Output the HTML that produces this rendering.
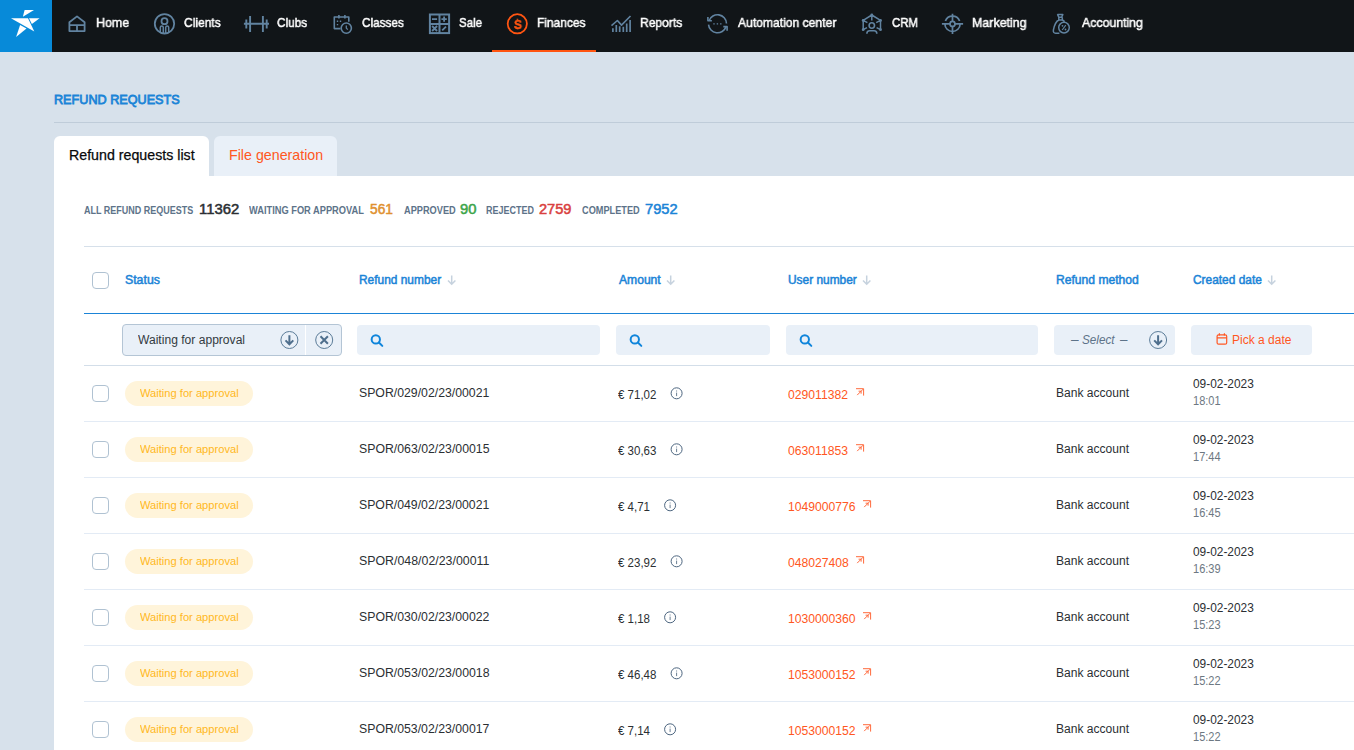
<!DOCTYPE html>
<html lang="en"><head><meta charset="utf-8"><title>Refund requests</title>
<style>
html,body{margin:0;padding:0;}
body{width:1354px;height:750px;overflow:hidden;background:#d7e1eb;font-family:"Liberation Sans",sans-serif;}
#app{position:relative;width:1354px;height:750px;overflow:hidden;}
.t{position:absolute;white-space:nowrap;line-height:1;transform-origin:0 0;}
.b{position:absolute;box-sizing:border-box;}
.cb{position:absolute;box-sizing:border-box;width:17px;height:17px;left:92px;border:1px solid #b0c2d2;border-radius:4px;background:#fff;}
.ln{position:absolute;left:84px;width:1270px;height:1px;background:#e3ebf5;}
.inp{position:absolute;box-sizing:border-box;top:325px;height:30px;background:#e9f0f8;border-radius:4px;}
.badge{position:absolute;left:125px;width:128px;height:25px;border-radius:13px;background:#fff4da;}
svg{position:absolute;overflow:visible;}
.g{will-change:transform;}

</style></head><body>
<div id="app">
<div class="b" style="left:0;top:0;width:1354px;height:52px;background:#111518"></div>
<div class="b" style="left:0;top:0;width:52px;height:52px;background:#078ad9"></div>
<div class="b" style="left:492px;top:50px;width:104px;height:2px;background:#ff5410"></div>
<svg style="left:0;top:0" width="1354" height="52" viewBox="0 0 1354 52"><g fill="#fff"><polygon points="24.6,10.1 34,10 22.9,16.7"/><polygon points="11,18.2 28,18.2 34.3,31.6"/><polygon points="29,18.2 39.6,18.2 31.9,24"/><polygon points="20.1,25 26.5,28.4 16.1,36.9"/></g><g fill="none" stroke="#6183a0" stroke-width="1.8" stroke-linejoin="round" stroke-linecap="butt"><path d="M69.4 31.1 V22.3 L77 16.4 L84.6 22.3 V31.1 Z M69.4 25.1 H84.6 M77 25.1 V31.1"/><circle cx="164.5" cy="23.8" r="9.7"/><circle cx="164.5" cy="21.2" r="3"/><path d="M160.3 32.3 V27.6 a1.5 1.5 0 0 1 3 0 V33.2 M165.7 33.2 V27.6 a1.5 1.5 0 0 1 3 0 V32.3" stroke-width="1.5"/><path d="M243.9 23.8 H269 M250.1 15.9 V31.9 M262.9 15.9 V31.9 M246.3 19.4 V28.6 M266.7 19.4 V28.6" stroke-width="1.9"/><path d="M340.5 28.6 H334.3 V17 H348.8 V21.8 M338.9 14.9 V18.6 M344.9 14.9 V18.6" stroke-width="1.6"/><path d="M336.8 21.3 h1.4 M339.8 21.3 h1.4 M336.8 24.6 h1.4" stroke-width="1.4"/><circle cx="346.3" cy="28.1" r="5.1" stroke-width="1.6"/><path d="M346.3 25.4 V28.1 L347.8 29.6" stroke-width="1.3"/><rect x="429.9" y="14.5" width="19.2" height="18.6" stroke-width="2" stroke-linejoin="miter"/><path d="M439.5 14.5 V33.1 M429.9 23.9 H449.1" stroke-width="2"/><path d="M432 19.1 h5.1 M441.4 19.1 h5.4 M444.1 16.4 v5.4 M432.1 26 l5 5 M437.1 26 l-5 5 M442.2 30.4 l3.8 -3.7" stroke-width="1.8"/><path d="M612.9 31.9 V28.2 M616.3 31.9 V25.1 M619.7 31.9 V26.2 M623.3 31.9 V26.7 M626.7 31.9 V23.6 M630.1 31.9 V20" stroke-width="1.7"/><path d="M611.5 25.6 L617.4 20.5 L621.5 25.1 L630.5 16" stroke-width="1.6"/><path d="M709.04 20.72 A9 9 0 0 1 726.49 23.49 M708.53 24.58 A9 9 0 0 0 725.96 26.88" stroke-width="1.6"/><path d="M707.9 17 V20.8 H711.9 M727.1 30.8 V26.6 H723.3" stroke-width="1.6"/><path d="M713.3 23.9 h1.4 M716.7 23.9 h1.4 M720.1 23.9 h1.4" stroke-width="1.4"/><path d="M863.2 29.7 V20.4 L871.8 15 L880.5 20.4 V29.7 M871.8 15 V20.4 M863.2 20.4 L867.4 22.7 M880.5 20.4 L876.2 22.7 M863.2 29.7 L867 27.6 M880.5 29.7 L876.6 27.6" stroke-width="1.5"/><circle cx="871.8" cy="25.5" r="2.7" stroke-width="1.6"/><path d="M866.9 33.8 v-0.4 a2.7 2.7 0 0 1 2.7 -2.7 h4.5 a2.7 2.7 0 0 1 2.7 2.7 v0.4" stroke-width="1.6"/><path d="M945.4 21 A7.6 7.6 0 0 1 959.6 21 M944.9 23.9 A7.6 7.6 0 0 0 960.1 23.9" stroke-width="1.7"/><path d="M941.9 23.9 H963.1 M952.5 13.8 V34" stroke-width="1.7"/><circle cx="952.5" cy="23.9" r="2.5" fill="#111518" stroke-width="1.7"/><path d="M1057.6 14.6 H1062.8 L1061.6 17.3 H1058.8 Z M1058.8 17.3 V20 H1062.3 V17.3 M1058.8 20 C1055.5 21.5 1054.2 26 1053.4 30 C1053 32 1054 33.2 1055.6 33.2 H1059.4 M1062.3 20 C1063.2 20.4 1064 21 1064.6 21.8" stroke-width="1.5"/><circle cx="1064" cy="27.6" r="5.3" stroke-width="1.5"/><path d="M1065.8 25.2 L1062.2 30" stroke-width="1.2"/></g><g fill="#6183a0"><circle cx="871.8" cy="15" r="1.4"/><circle cx="863.2" cy="20.4" r="1.4"/><circle cx="880.5" cy="20.4" r="1.4"/><circle cx="863.2" cy="29.7" r="1.4"/><circle cx="880.5" cy="29.7" r="1.4"/><circle cx="1062.5" cy="25.8" r="0.9"/><circle cx="1065.5" cy="29.5" r="0.9"/></g><circle cx="517.3" cy="23.8" r="9.6" fill="none" stroke="#ff5512" stroke-width="1.8"/><path d="M517.4 18.7 V19.8 M517.4 28 V29.2" stroke="#ff5512" stroke-width="1.6" fill="none"/></svg>
<div class="b" style="left:54px;top:122px;width:1300px;height:1px;background:#bfccd9"></div>
<div class="b" style="left:54px;top:136px;width:155px;height:40px;background:#fff;border-radius:6px 6px 0 0"></div>
<div class="b" style="left:214px;top:136px;width:123px;height:40px;background:#e9f0f8;border-radius:6px 6px 0 0"></div>
<div class="b" style="left:54px;top:176px;width:1300px;height:574px;background:#fff"></div>
<div class="ln" style="top:246px;background:#d6e0ea"></div>
<div class="ln" style="top:313px;background:#1b84d7"></div>
<div class="ln" style="top:365px;background:#d3dee9"></div>
<div class="ln" style="top:421px"></div>
<div class="ln" style="top:477px"></div>
<div class="ln" style="top:533px"></div>
<div class="ln" style="top:589px"></div>
<div class="ln" style="top:645px"></div>
<div class="ln" style="top:701px"></div>
<div class="cb" style="top:272px"></div>
<div class="cb" style="top:385px"></div>
<div class="badge" style="top:381px"></div>
<div class="cb" style="top:441px"></div>
<div class="badge" style="top:437px"></div>
<div class="cb" style="top:497px"></div>
<div class="badge" style="top:493px"></div>
<div class="cb" style="top:553px"></div>
<div class="badge" style="top:549px"></div>
<div class="cb" style="top:609px"></div>
<div class="badge" style="top:605px"></div>
<div class="cb" style="top:665px"></div>
<div class="badge" style="top:661px"></div>
<div class="cb" style="top:721px"></div>
<div class="badge" style="top:717px"></div>
<div class="b" style="left:122px;top:324px;width:220px;height:32px;background:#e9f0f8;border:1px solid #b4c5d5;border-radius:4px"></div>
<div class="b" style="left:305px;top:325px;width:1px;height:30px;background:#fff"></div>
<div class="inp" style="left:357px;width:243px"></div>
<div class="inp" style="left:616px;width:154px"></div>
<div class="inp" style="left:786px;width:252px"></div>
<div class="inp" style="left:1054px;width:121px"></div>
<div class="inp" style="left:1191px;width:121px"></div>
<svg style="left:0;top:0" width="1354" height="750" viewBox="0 0 1354 750"><circle cx="289.4" cy="340" r="8.5" fill="none" stroke="#5b7c98" stroke-width="1"/><path d="M289.4 335.2 V344 M285.5 340.4 L289.4 344.3 L293.29999999999995 340.4" fill="none" stroke="#4f6f8d" stroke-width="2"/><circle cx="1158.1" cy="340" r="8.5" fill="none" stroke="#5b7c98" stroke-width="1"/><path d="M1158.1 335.2 V344 M1154.1999999999998 340.4 L1158.1 344.3 L1162.0 340.4" fill="none" stroke="#4f6f8d" stroke-width="2"/><circle cx="324.2" cy="340" r="8.5" fill="none" stroke="#5b7c98" stroke-width="1"/><path d="M320.5 336.3 L327.9 343.7 M327.9 336.3 L320.5 343.7" fill="none" stroke="#4f6f8d" stroke-width="2"/><circle cx="375.8" cy="339.4" r="4.15" fill="none" stroke="#0f85db" stroke-width="2"/><path d="M378.9 342.5 L382.3 345.9" stroke="#0f85db" stroke-width="2" stroke-linecap="round"/><circle cx="634.8" cy="339.4" r="4.15" fill="none" stroke="#0f85db" stroke-width="2"/><path d="M637.9 342.5 L641.3 345.9" stroke="#0f85db" stroke-width="2" stroke-linecap="round"/><circle cx="804.8" cy="339.4" r="4.15" fill="none" stroke="#0f85db" stroke-width="2"/><path d="M807.9 342.5 L811.3 345.9" stroke="#0f85db" stroke-width="2" stroke-linecap="round"/><rect x="1217.1" y="334.8" width="9.6" height="9.4" rx="1.5" fill="none" stroke="#ff5722" stroke-width="1.2"/><path d="M1217.1 337.8 H1226.7 M1219.4 333.2 V335.6 M1224.4 333.2 V335.6" fill="none" stroke="#ff5722" stroke-width="1.2"/><path d="M451.7 275.6 V284 M448 280.4 L451.7 284.2 L455.4 280.4" fill="none" stroke="#c6d2de" stroke-width="1.5"/><path d="M670.7 275.6 V284 M667 280.4 L670.7 284.2 L674.4 280.4" fill="none" stroke="#c6d2de" stroke-width="1.5"/><path d="M866.7 275.6 V284 M863 280.4 L866.7 284.2 L870.4 280.4" fill="none" stroke="#c6d2de" stroke-width="1.5"/><path d="M1271.7 275.6 V284 M1268 280.4 L1271.7 284.2 L1275.4 280.4" fill="none" stroke="#c6d2de" stroke-width="1.5"/><circle cx="676.6" cy="393.3" r="5.5" fill="none" stroke="#4d6680" stroke-width="1"/><path d="M676.6 392.6 V396.1 M676.6 390.5 v1" stroke="#6b7f93" stroke-width="1" fill="none"/><path d="M856 388.7 H863.6 V395.6 M863.2 389.1 L857.2 395.1 M858.6 391.2 H861.1 V393.7" fill="none" stroke="#ff6a3d" stroke-width="1"/><circle cx="676.6" cy="449.3" r="5.5" fill="none" stroke="#4d6680" stroke-width="1"/><path d="M676.6 448.6 V452.1 M676.6 446.5 v1" stroke="#6b7f93" stroke-width="1" fill="none"/><path d="M856 444.7 H863.6 V451.6 M863.2 445.1 L857.2 451.1 M858.6 447.2 H861.1 V449.7" fill="none" stroke="#ff6a3d" stroke-width="1"/><circle cx="670.1" cy="505.3" r="5.5" fill="none" stroke="#4d6680" stroke-width="1"/><path d="M670.1 504.6 V508.1 M670.1 502.5 v1" stroke="#6b7f93" stroke-width="1" fill="none"/><path d="M863 500.7 H870.6 V507.6 M870.2 501.1 L864.2 507.1 M865.6 503.2 H868.1 V505.7" fill="none" stroke="#ff6a3d" stroke-width="1"/><circle cx="676.6" cy="561.3" r="5.5" fill="none" stroke="#4d6680" stroke-width="1"/><path d="M676.6 560.6 V564.1 M676.6 558.5 v1" stroke="#6b7f93" stroke-width="1" fill="none"/><path d="M856 556.7 H863.6 V563.6 M863.2 557.1 L857.2 563.1 M858.6 559.2 H861.1 V561.7" fill="none" stroke="#ff6a3d" stroke-width="1"/><circle cx="670.1" cy="617.3" r="5.5" fill="none" stroke="#4d6680" stroke-width="1"/><path d="M670.1 616.6 V620.1 M670.1 614.5 v1" stroke="#6b7f93" stroke-width="1" fill="none"/><path d="M863 612.7 H870.6 V619.6 M870.2 613.1 L864.2 619.1 M865.6 615.2 H868.1 V617.7" fill="none" stroke="#ff6a3d" stroke-width="1"/><circle cx="676.6" cy="673.3" r="5.5" fill="none" stroke="#4d6680" stroke-width="1"/><path d="M676.6 672.6 V676.1 M676.6 670.5 v1" stroke="#6b7f93" stroke-width="1" fill="none"/><path d="M863 668.7 H870.6 V675.6 M870.2 669.1 L864.2 675.1 M865.6 671.2 H868.1 V673.7" fill="none" stroke="#ff6a3d" stroke-width="1"/><circle cx="670.1" cy="729.3" r="5.5" fill="none" stroke="#4d6680" stroke-width="1"/><path d="M670.1 728.6 V732.1 M670.1 726.5 v1" stroke="#6b7f93" stroke-width="1" fill="none"/><path d="M863 724.7 H870.6 V731.6 M870.2 725.1 L864.2 731.1 M865.6 727.2 H868.1 V729.7" fill="none" stroke="#ff6a3d" stroke-width="1"/></svg>
<span class="t g" style="left:95.71px;top:16.10px;font-size:13px;color:#ffffff;transform:scaleX(0.9571);-webkit-text-stroke:0.5px #ffffff;">Home</span>
<span class="t g" style="left:183.85px;top:16.10px;font-size:13px;color:#ffffff;transform:scaleX(0.9231);-webkit-text-stroke:0.5px #ffffff;">Clients</span>
<span class="t g" style="left:276.95px;top:16.10px;font-size:13px;color:#ffffff;transform:scaleX(0.9057);-webkit-text-stroke:0.5px #ffffff;">Clubs</span>
<span class="t g" style="left:362.45px;top:16.10px;font-size:13px;color:#ffffff;transform:scaleX(0.9041);-webkit-text-stroke:0.5px #ffffff;">Classes</span>
<span class="t g" style="left:458.85px;top:16.10px;font-size:13px;color:#ffffff;transform:scaleX(0.8878);-webkit-text-stroke:0.5px #ffffff;">Sale</span>
<span class="t g" style="left:537.05px;top:16.10px;font-size:13px;color:#ffffff;transform:scaleX(0.9194);-webkit-text-stroke:0.5px #ffffff;">Finances</span>
<span class="t g" style="left:640.35px;top:16.10px;font-size:13px;color:#ffffff;transform:scaleX(0.9291);-webkit-text-stroke:0.5px #ffffff;">Reports</span>
<span class="t g" style="left:737.85px;top:16.10px;font-size:13px;color:#ffffff;transform:scaleX(0.9320);-webkit-text-stroke:0.5px #ffffff;">Automation center</span>
<span class="t g" style="left:892.25px;top:16.10px;font-size:13px;color:#ffffff;transform:scaleX(0.8771);-webkit-text-stroke:0.5px #ffffff;">CRM</span>
<span class="t g" style="left:972.00px;top:16.10px;font-size:13px;color:#ffffff;transform:scaleX(0.9573);-webkit-text-stroke:0.5px #ffffff;">Marketing</span>
<span class="t g" style="left:1081.75px;top:16.10px;font-size:13px;color:#ffffff;transform:scaleX(0.9465);-webkit-text-stroke:0.5px #ffffff;">Accounting</span>
<span class="t g" style="left:513.95px;top:17.50px;font-size:13px;color:#ff5512;transform:scaleX(0.9218);font-weight:700;-webkit-text-stroke:0.5px #ff5512;">S</span>
<span class="t" style="left:53.95px;top:93.14px;font-size:13.3px;color:#1b84d7;transform:scaleX(0.9500);-webkit-text-stroke:0.8px #1b84d7;">REFUND REQUESTS</span>
<span class="t" style="left:68.75px;top:147.73px;font-size:14.5px;color:#08090b;transform:scaleX(0.9803);-webkit-text-stroke:0.25px #08090b;">Refund requests list</span>
<span class="t" style="left:228.63px;top:147.73px;font-size:14.5px;color:#ff5722;transform:scaleX(0.9819);">File generation</span>
<span class="t" style="left:84.30px;top:205.98px;font-size:10.3px;color:#5d7389;transform:scaleX(0.8738);font-weight:700;">ALL REFUND REQUESTS</span>
<span class="t" style="left:198.57px;top:202.92px;font-size:13.8px;color:#2b2f33;transform:scaleX(1.0769);-webkit-text-stroke:0.5px #2b2f33;">11362</span>
<span class="t" style="left:249.00px;top:205.98px;font-size:10.3px;color:#5d7389;transform:scaleX(0.9002);font-weight:700;">WAITING FOR APPROVAL</span>
<span class="t" style="left:370.45px;top:202.92px;font-size:13.8px;color:#e0912f;transform:scaleX(0.9974);-webkit-text-stroke:0.5px #e0912f;">561</span>
<span class="t" style="left:404.00px;top:205.98px;font-size:10.3px;color:#5d7389;transform:scaleX(0.8951);font-weight:700;">APPROVED</span>
<span class="t" style="left:460.25px;top:202.92px;font-size:13.8px;color:#3da54a;transform:scaleX(1.0726);-webkit-text-stroke:0.5px #3da54a;">90</span>
<span class="t" style="left:486.00px;top:205.98px;font-size:10.3px;color:#5d7389;transform:scaleX(0.8718);font-weight:700;">REJECTED</span>
<span class="t" style="left:539.25px;top:202.92px;font-size:13.8px;color:#d9413f;transform:scaleX(1.0583);-webkit-text-stroke:0.5px #d9413f;">2759</span>
<span class="t" style="left:582.00px;top:205.98px;font-size:10.3px;color:#5d7389;transform:scaleX(0.8919);font-weight:700;">COMPLETED</span>
<span class="t" style="left:645.25px;top:202.92px;font-size:13.8px;color:#1b84d7;transform:scaleX(1.0615);-webkit-text-stroke:0.5px #1b84d7;">7952</span>
<span class="t" style="left:124.55px;top:273.84px;font-size:12px;color:#1b84d7;transform:scaleX(1.0252);-webkit-text-stroke:0.5px #1b84d7;">Status</span>
<span class="t" style="left:359.05px;top:273.84px;font-size:12px;color:#1b84d7;transform:scaleX(0.9926);-webkit-text-stroke:0.5px #1b84d7;">Refund number</span>
<span class="t" style="left:618.85px;top:273.84px;font-size:12px;color:#1b84d7;transform:scaleX(1.0087);-webkit-text-stroke:0.5px #1b84d7;">Amount</span>
<span class="t" style="left:788.45px;top:273.84px;font-size:12px;color:#1b84d7;transform:scaleX(0.9919);-webkit-text-stroke:0.5px #1b84d7;">User number</span>
<span class="t" style="left:1056.05px;top:273.84px;font-size:12px;color:#1b84d7;transform:scaleX(1.0092);-webkit-text-stroke:0.5px #1b84d7;">Refund method</span>
<span class="t" style="left:1193.45px;top:273.84px;font-size:12px;color:#1b84d7;transform:scaleX(0.9922);-webkit-text-stroke:0.5px #1b84d7;">Created date</span>
<span class="t" style="left:138.30px;top:333.84px;font-size:12px;color:#333a41;transform:scaleX(1.0073);">Waiting for approval</span>
<span class="t" style="left:1070.97px;top:333.84px;font-size:12px;color:#5d7389;transform:scaleX(1.1421);font-style:italic;">–</span>
<span class="t" style="left:1081.90px;top:333.84px;font-size:12px;color:#5d7389;transform:scaleX(0.9751);font-style:italic;">Select</span>
<span class="t" style="left:1119.75px;top:333.84px;font-size:12px;color:#5d7389;transform:scaleX(1.1155);font-style:italic;">–</span>
<span class="t" style="left:1231.50px;top:333.84px;font-size:12px;color:#ff5722;transform:scaleX(1.0007);">Pick a date</span>
<span class="t" style="left:140.00px;top:387.69px;font-size:11px;color:#ffb822;transform:scaleX(1.0127);">Waiting for approval</span>
<span class="t" style="left:358.60px;top:386.84px;font-size:12px;color:#2b2f33;transform:scaleX(1.0228);">SPOR/029/02/23/00021</span>
<span class="t" style="left:617.60px;top:388.54px;font-size:12px;color:#2b2f33;transform:scaleX(0.9588);">€ 71,02</span>
<span class="t" style="left:788.10px;top:388.84px;font-size:12px;color:#ff5722;transform:scaleX(1.0134);">029011382</span>
<span class="t" style="left:1055.60px;top:386.84px;font-size:12px;color:#2b2f33;transform:scaleX(1.0047);">Bank account</span>
<span class="t" style="left:1193.30px;top:377.84px;font-size:12px;color:#2b2f33;transform:scaleX(0.9906);">09-02-2023</span>
<span class="t" style="left:1192.80px;top:394.84px;font-size:12px;color:#6d7882;transform:scaleX(0.9191);">18:01</span>
<span class="t" style="left:140.00px;top:443.69px;font-size:11px;color:#ffb822;transform:scaleX(1.0127);">Waiting for approval</span>
<span class="t" style="left:358.60px;top:442.84px;font-size:12px;color:#2b2f33;transform:scaleX(1.0241);">SPOR/063/02/23/00015</span>
<span class="t" style="left:617.60px;top:444.54px;font-size:12px;color:#2b2f33;transform:scaleX(0.9588);">€ 30,63</span>
<span class="t" style="left:788.10px;top:444.84px;font-size:12px;color:#ff5722;transform:scaleX(1.0134);">063011853</span>
<span class="t" style="left:1055.60px;top:442.84px;font-size:12px;color:#2b2f33;transform:scaleX(1.0047);">Bank account</span>
<span class="t" style="left:1193.30px;top:433.84px;font-size:12px;color:#2b2f33;transform:scaleX(0.9906);">09-02-2023</span>
<span class="t" style="left:1192.80px;top:450.84px;font-size:12px;color:#6d7882;transform:scaleX(0.9191);">17:44</span>
<span class="t" style="left:140.00px;top:499.69px;font-size:11px;color:#ffb822;transform:scaleX(1.0127);">Waiting for approval</span>
<span class="t" style="left:358.60px;top:498.84px;font-size:12px;color:#2b2f33;transform:scaleX(1.0228);">SPOR/049/02/23/00021</span>
<span class="t" style="left:617.60px;top:500.54px;font-size:12px;color:#2b2f33;transform:scaleX(0.9588);">€ 4,71</span>
<span class="t" style="left:788.30px;top:500.84px;font-size:12px;color:#ff5722;transform:scaleX(1.0134);">1049000776</span>
<span class="t" style="left:1055.60px;top:498.84px;font-size:12px;color:#2b2f33;transform:scaleX(1.0047);">Bank account</span>
<span class="t" style="left:1193.30px;top:489.84px;font-size:12px;color:#2b2f33;transform:scaleX(0.9906);">09-02-2023</span>
<span class="t" style="left:1192.80px;top:506.84px;font-size:12px;color:#6d7882;transform:scaleX(0.9191);">16:45</span>
<span class="t" style="left:140.00px;top:555.69px;font-size:11px;color:#ffb822;transform:scaleX(1.0127);">Waiting for approval</span>
<span class="t" style="left:358.60px;top:554.84px;font-size:12px;color:#2b2f33;transform:scaleX(1.0304);">SPOR/048/02/23/00011</span>
<span class="t" style="left:617.60px;top:556.54px;font-size:12px;color:#2b2f33;transform:scaleX(0.9588);">€ 23,92</span>
<span class="t" style="left:788.10px;top:556.84px;font-size:12px;color:#ff5722;transform:scaleX(1.0134);">048027408</span>
<span class="t" style="left:1055.60px;top:554.84px;font-size:12px;color:#2b2f33;transform:scaleX(1.0047);">Bank account</span>
<span class="t" style="left:1193.30px;top:545.84px;font-size:12px;color:#2b2f33;transform:scaleX(0.9906);">09-02-2023</span>
<span class="t" style="left:1192.80px;top:562.84px;font-size:12px;color:#6d7882;transform:scaleX(0.9191);">16:39</span>
<span class="t" style="left:140.00px;top:611.69px;font-size:11px;color:#ffb822;transform:scaleX(1.0127);">Waiting for approval</span>
<span class="t" style="left:358.60px;top:610.84px;font-size:12px;color:#2b2f33;transform:scaleX(1.0233);">SPOR/030/02/23/00022</span>
<span class="t" style="left:617.60px;top:612.54px;font-size:12px;color:#2b2f33;transform:scaleX(0.9588);">€ 1,18</span>
<span class="t" style="left:788.30px;top:612.84px;font-size:12px;color:#ff5722;transform:scaleX(1.0134);">1030000360</span>
<span class="t" style="left:1055.60px;top:610.84px;font-size:12px;color:#2b2f33;transform:scaleX(1.0047);">Bank account</span>
<span class="t" style="left:1193.30px;top:601.84px;font-size:12px;color:#2b2f33;transform:scaleX(0.9906);">09-02-2023</span>
<span class="t" style="left:1192.80px;top:618.84px;font-size:12px;color:#6d7882;transform:scaleX(0.9191);">15:23</span>
<span class="t" style="left:140.00px;top:667.69px;font-size:11px;color:#ffb822;transform:scaleX(1.0127);">Waiting for approval</span>
<span class="t" style="left:358.60px;top:666.84px;font-size:12px;color:#2b2f33;transform:scaleX(1.0238);">SPOR/053/02/23/00018</span>
<span class="t" style="left:617.60px;top:668.54px;font-size:12px;color:#2b2f33;transform:scaleX(0.9588);">€ 46,48</span>
<span class="t" style="left:788.30px;top:668.84px;font-size:12px;color:#ff5722;transform:scaleX(1.0134);">1053000152</span>
<span class="t" style="left:1055.60px;top:666.84px;font-size:12px;color:#2b2f33;transform:scaleX(1.0047);">Bank account</span>
<span class="t" style="left:1193.30px;top:657.84px;font-size:12px;color:#2b2f33;transform:scaleX(0.9906);">09-02-2023</span>
<span class="t" style="left:1192.80px;top:674.84px;font-size:12px;color:#6d7882;transform:scaleX(0.9191);">15:22</span>
<span class="t" style="left:140.00px;top:723.69px;font-size:11px;color:#ffb822;transform:scaleX(1.0127);">Waiting for approval</span>
<span class="t" style="left:358.60px;top:722.84px;font-size:12px;color:#2b2f33;transform:scaleX(1.0230);">SPOR/053/02/23/00017</span>
<span class="t" style="left:617.60px;top:724.54px;font-size:12px;color:#2b2f33;transform:scaleX(0.9588);">€ 7,14</span>
<span class="t" style="left:788.30px;top:724.84px;font-size:12px;color:#ff5722;transform:scaleX(1.0134);">1053000152</span>
<span class="t" style="left:1055.60px;top:722.84px;font-size:12px;color:#2b2f33;transform:scaleX(1.0047);">Bank account</span>
<span class="t" style="left:1193.30px;top:713.84px;font-size:12px;color:#2b2f33;transform:scaleX(0.9906);">09-02-2023</span>
<span class="t" style="left:1192.80px;top:730.84px;font-size:12px;color:#6d7882;transform:scaleX(0.9191);">15:22</span>
</div>
</body></html>
